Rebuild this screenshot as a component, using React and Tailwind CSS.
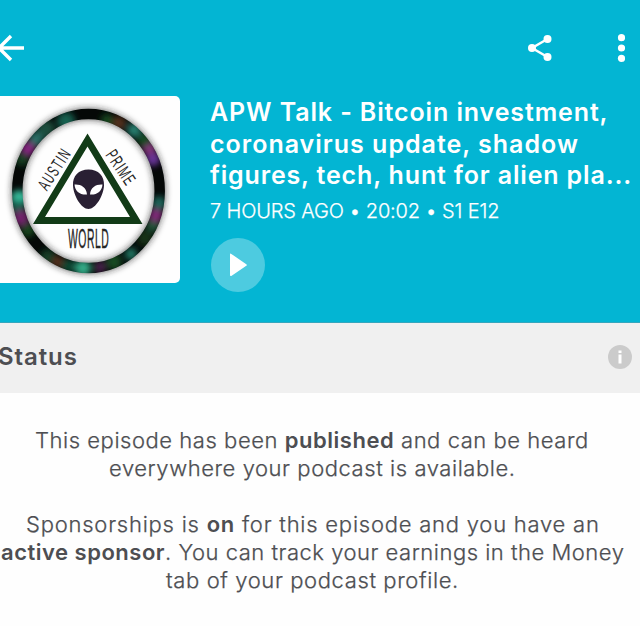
const hues = [
  [66, 25, "#17604f", 9], [46, 33, "#1b4e3c", 9], [36, 43, "#2c7168", 7], [28, 53, "#8a2285", 7], [22, 63, "#123f22", 7],
  [19, 102, "#36bd9c", 8], [18, 111, "#17604f", 7], [21, 122, "#72206c", 8], [28, 134, "#16451f", 7],
  [48, 161, "#123c25", 8], [58, 166, "#592d1c", 6], [68, 170, "#0e4630", 7], [83, 172, "#30aa86", 8], [100, 171, "#49204d", 6],
  [114, 166, "#174b24", 8], [131, 158, "#217a66", 6], [145, 142, "#193319", 8], [153, 129, "#20553b", 7],
  [156, 119, "#812579", 7], [159, 107, "#1d655a", 7], [153, 63, "#6b359b", 7], [149, 52, "#85347d", 7],
  [144, 44, "#174b24", 7], [134, 34, "#288071", 7], [119, 27, "#54301c", 7], [107, 24, "#174b24", 6],
];

function Cover() {
  return (
    <svg viewBox="0 0 180 187" className="h-[187px] w-[180px] shrink-0 rounded-r-[5px] bg-[#fefefe]">
      <defs>
        <filter id="glow" x="-20%" y="-20%" width="140%" height="140%"><feGaussianBlur stdDeviation="3" /></filter>
        <mask id="ring"><ellipse cx="88.5" cy="95" rx="71.2" ry="77" fill="none" stroke="white" strokeWidth="10.5" /></mask>
      </defs>
      <ellipse cx="88.5" cy="95" rx="71.2" ry="77" fill="none" stroke="#222" strokeOpacity=".65" strokeWidth="12" filter="url(#glow)" />
      <g mask="url(#ring)">
        <rect width="180" height="187" fill="#050807" />
        <g filter="url(#glow)">{hues.map(([x, y, c, r]) => <circle key={`${x}-${y}`} cx={x} cy={y} r={r} fill={c} />)}</g>
      </g>
      <path fill="#123b17" fillRule="evenodd" d="M87.5 37.5 142.5 128H33ZM87.5 50.5 45 121h85Z" />
      <path fill="#292033" d="M88.5 73.5c-10 0-16 6.500-15.500 16 .5 10.500 8.500 23.500 15.500 23.500s15-13 15.500-23.500c.5-9.500-5.500-16-15.500-16Z" />
      <path fill="#fff" d="M74.500 88.500c6-.5 12 2.500 12.500 10-7 .5-12-3-12.500-10ZM102.500 88.500c-6-.5-12 2.500-12.500 10 7 .5 12-3 12.500-10Z" />
      <g fill="#252525" className="font-['Liberation_Sans_Narrow','Liberation_Sans',sans-serif]">
        <text transform="translate(47 95.500) rotate(-57) scale(.58 1)" fontSize="17.500" textLength="77">AUSTIN</text>
        <text transform="translate(105 59) rotate(56) scale(.58 1)" fontSize="18" textLength="65">PRIME</text>
        <text transform="translate(68 152) scale(.385 1)" fontSize="27" textLength="106" stroke="#252525" strokeWidth=".4">WORLD</text>
      </g>
    </svg>
  );
}

export default function App() {
  return (
    <main className="h-[626px] w-[640px] overflow-hidden bg-[#fefefe] font-['Inter',sans-serif] text-[#4d4e52]">
      <header className="h-[323px] border-b border-[#35a6bd] bg-[#03b5d3] text-white">
        <nav className="flex h-24 items-center">
          <svg viewBox="0 0 24 28" className="h-7 w-6" fill="none" stroke="currentColor" strokeWidth="3.4"><path d="M24 14H0M11 2-1 14 11 26" /></svg>
          <svg viewBox="0 0 26 28" className="ml-[503px] h-7 w-[26px]" fill="currentColor"><path d="M20.500 5 5 14l15.500 9" fill="none" stroke="currentColor" strokeWidth="2.500" /><circle cx="20.500" cy="5" r="4" /><circle cx="5" cy="14" r="4" /><circle cx="20.500" cy="23" r="4" /></svg>
          <svg viewBox="0 0 8 28" className="ml-[64px] h-7 w-2" fill="currentColor"><circle cx="4.500" cy="3.700" r="3.600" /><circle cx="4.500" cy="14" r="3.600" /><circle cx="4.500" cy="24.300" r="3.600" /></svg>
        </nav>
        <div className="flex">
          <Cover />
          <div className="ml-[30px] whitespace-nowrap">
            <h1 className="pt-px text-[25px] font-semibold leading-[31.500px]">
              <span className="block tracking-[0.88px]">APW Talk - Bitcoin investment,</span>
              <span className="block tracking-[1px]">coronavirus update, shadow</span>
              <span className="block tracking-[0.84px]">figures, tech, hunt for alien pla...</span>
            </h1>
            <p className="mt-[2px] text-[20px] font-light leading-[34px] tracking-[-0.15px] [-webkit-text-stroke:0.25px_currentColor]">7 HOURS AGO • 20:02 • S1 E12</p>
            <button className="ml-px mt-[10px] flex size-[54px] items-center justify-center rounded-full bg-[#4dcbe0]">
              <svg viewBox="0 0 18 24" className="h-6 w-[18px]" fill="white"><path d="M1 1.500Q1 0 2.300.9L17.300 11.200Q18.500 12 17.300 12.800L2.300 22.900Q1 23.500 1 22Z" /></svg>
            </button>
          </div>
        </div>
      </header>
      <section className="flex h-[70px] items-center justify-between bg-[#f0f0f0] pb-[2px] pr-2">
        <h2 className="-ml-[2px] text-[24px] font-semibold tracking-[0.9px]">Status</h2>
        <svg viewBox="0 0 24 24" className="size-6"><circle cx="12" cy="12" r="12" fill="#cbcbcb" /><path fill="#fff" d="M10.500 5.500h3v2.500h-3zM10.500 9.500h3v9h-3z" /></svg>
      </section>
      <section className="flex flex-col gap-7 whitespace-nowrap pt-[33px] text-[22px] font-light leading-7 [-webkit-text-stroke:0.25px_currentColor]">
        <p>
          <span className="ml-[35px] block tracking-[0.54px]">This episode has been <b className="font-semibold [-webkit-text-stroke:0]">published</b> and can be heard</span>
          <span className="ml-[109px] block tracking-[0.56px]">everywhere your podcast is available.</span>
        </p>
        <p>
          <span className="ml-[26px] block tracking-[0.77px]">Sponsorships is <b className="font-semibold [-webkit-text-stroke:0]">on</b> for this episode and you have an</span>
          <span className="ml-[1px] block tracking-[0.51px]"><b className="font-semibold [-webkit-text-stroke:0]">active sponsor</b>. You can track your earnings in the Money</span>
          <span className="ml-[166px] block tracking-[0.61px]">tab of your podcast profile.</span>
        </p>
      </section>
    </main>
  );
}
